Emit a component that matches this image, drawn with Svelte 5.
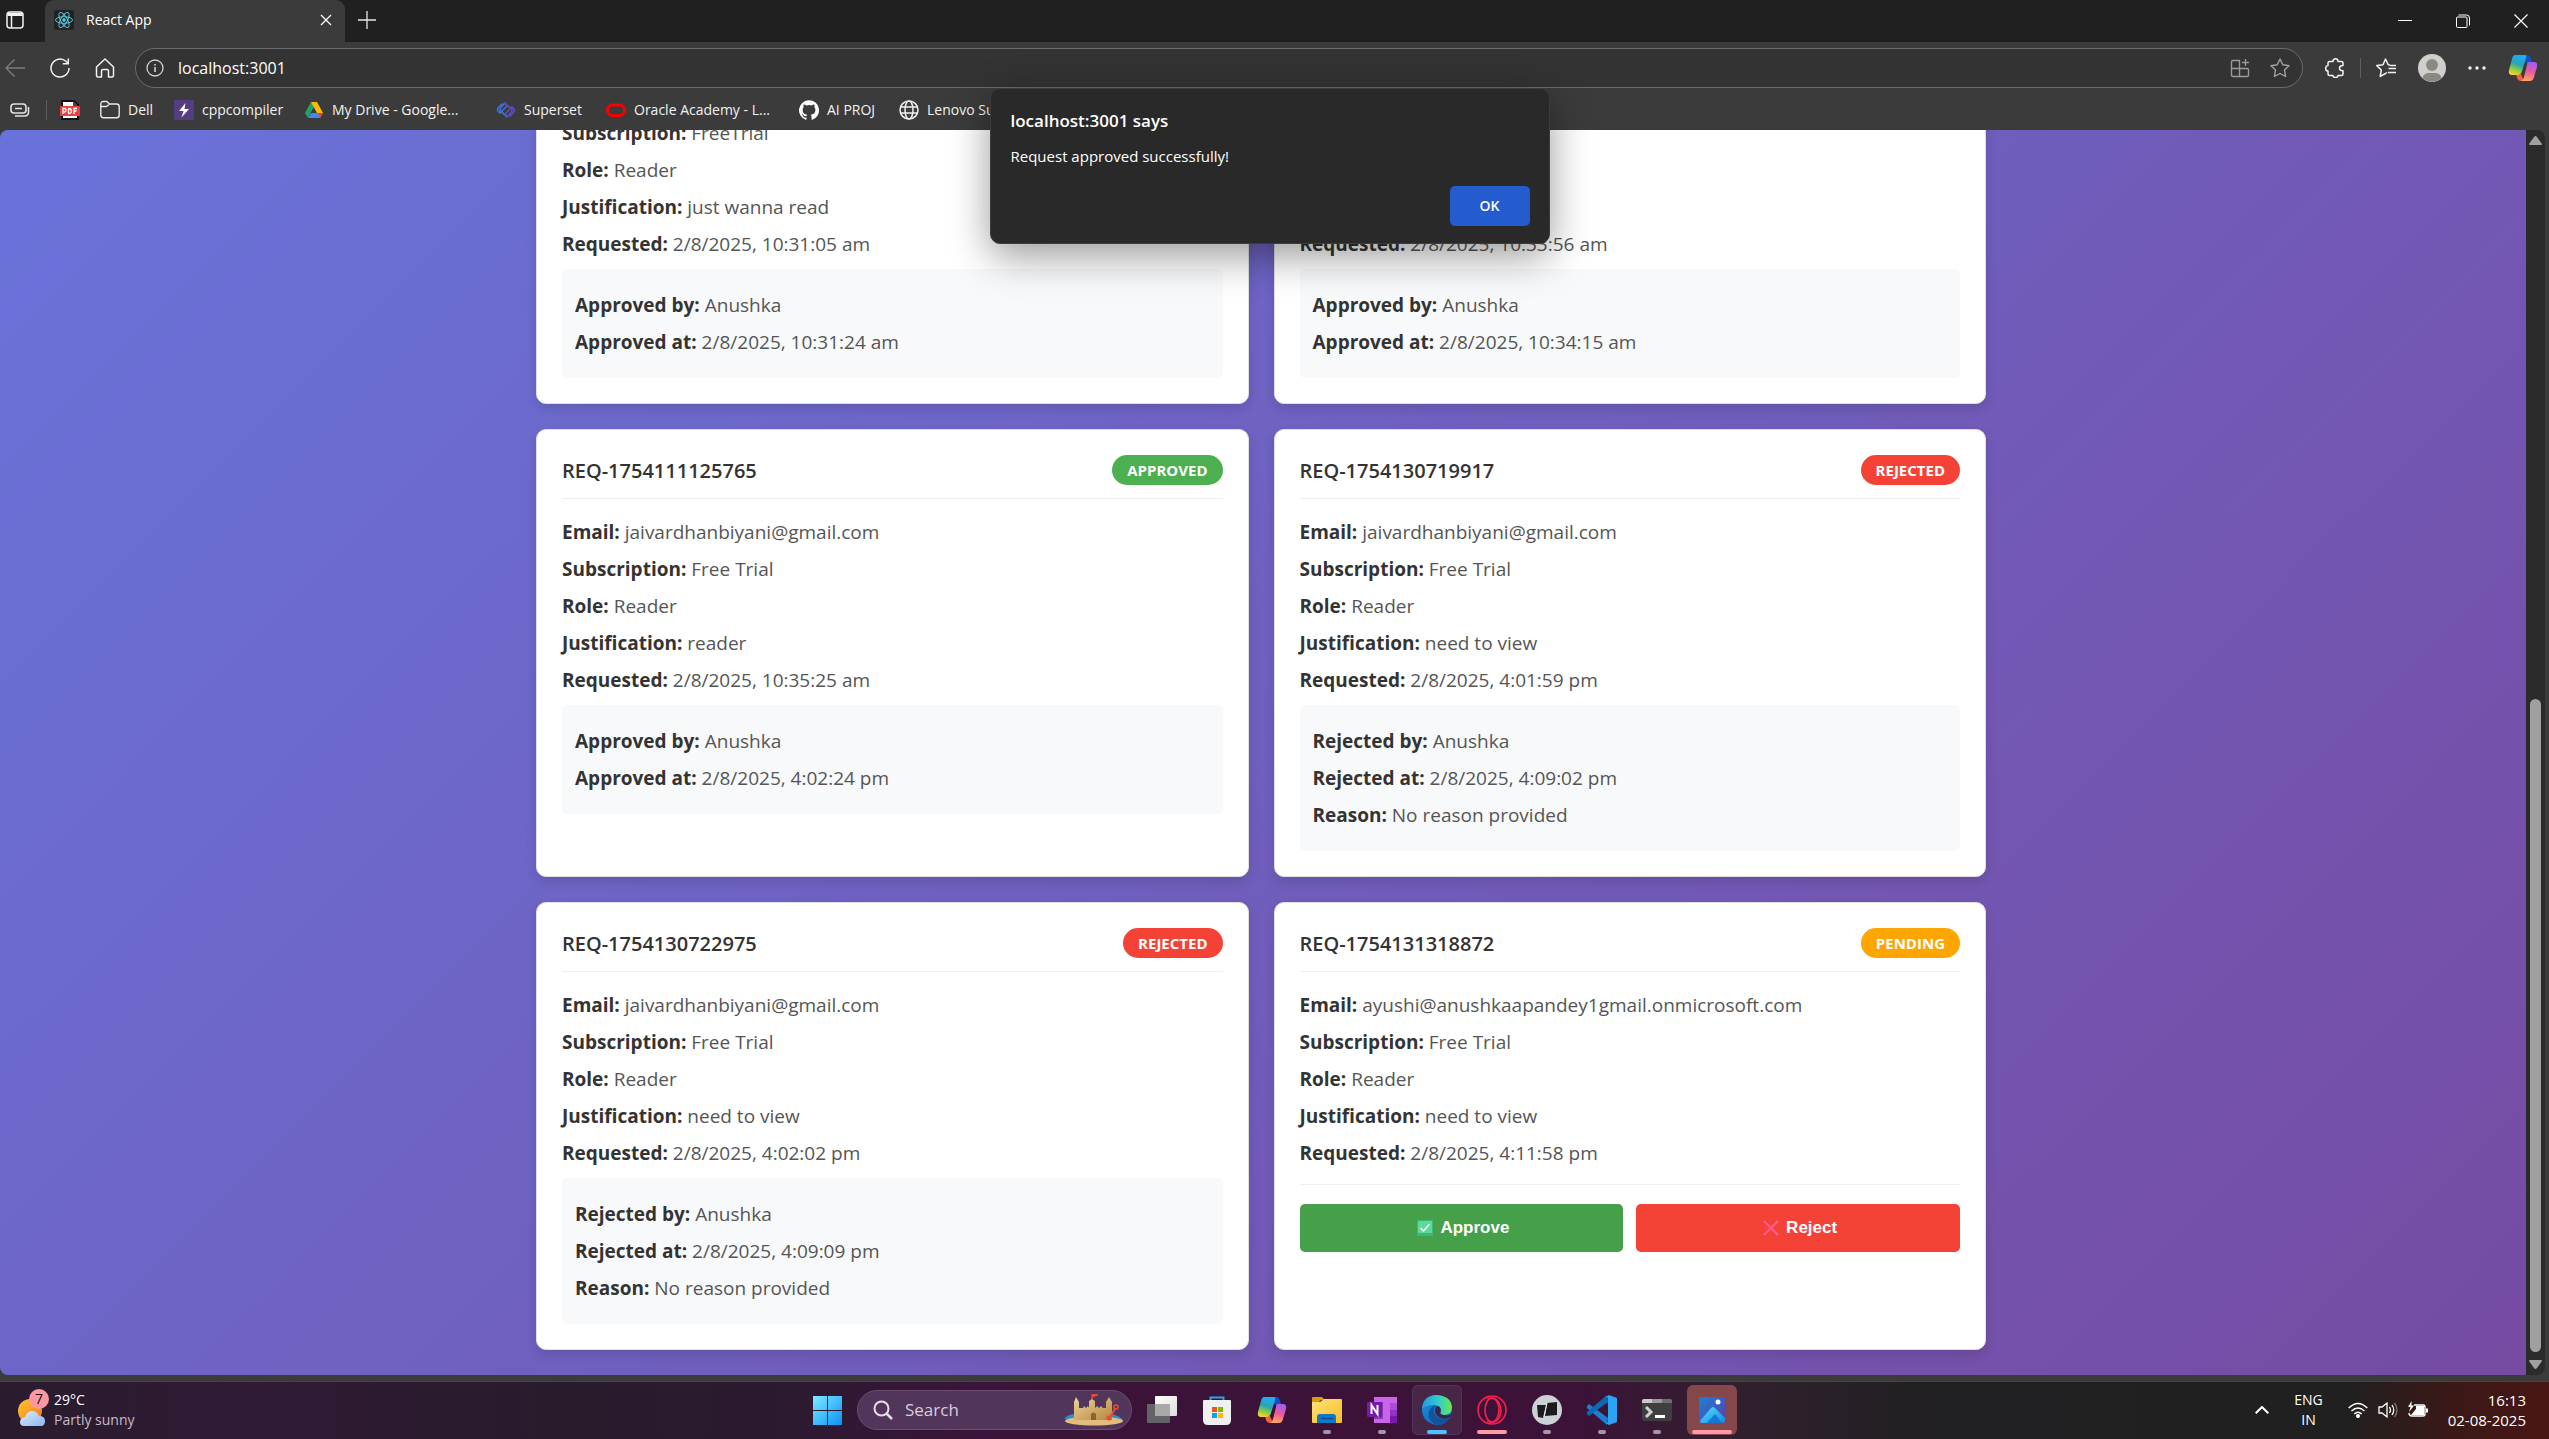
<script>
  const bookmarks = [
    { icon: 'pdf', label: '', width: 20 },
    { icon: 'folder', label: 'Dell', width: 54 },
    { icon: 'bolt', label: 'cppcompiler', width: 110 },
    { icon: 'drive', label: 'My Drive - Google...', width: 172 },
    { icon: 'superset', label: 'Superset', width: 90 },
    { icon: 'oracle', label: 'Oracle Academy - L...', width: 173 },
    { icon: 'github', label: 'AI PROJ', width: 80 },
    { icon: 'globe', label: 'Lenovo Su', width: 110 }
  ];

  const requests = [
    {
      status: 'approved',
      rows: [
        ['Subscription', 'FreeTrial'],
        ['Role', 'Reader'],
        ['Justification', 'just wanna read'],
        ['Requested', '2/8/2025, 10:31:05 am']
      ],
      outcome: [
        ['Approved by', 'Anushka'],
        ['Approved at', '2/8/2025, 10:31:24 am']
      ]
    },
    {
      status: 'approved',
      rows: [['Requested', '2/8/2025, 10:33:56 am']],
      outcome: [
        ['Approved by', 'Anushka'],
        ['Approved at', '2/8/2025, 10:34:15 am']
      ]
    },
    {
      id: 'REQ-1754111125765',
      status: 'approved',
      rows: [
        ['Email', 'jaivardhanbiyani@gmail.com'],
        ['Subscription', 'Free Trial'],
        ['Role', 'Reader'],
        ['Justification', 'reader'],
        ['Requested', '2/8/2025, 10:35:25 am']
      ],
      outcome: [
        ['Approved by', 'Anushka'],
        ['Approved at', '2/8/2025, 4:02:24 pm']
      ]
    },
    {
      id: 'REQ-1754130719917',
      status: 'rejected',
      rows: [
        ['Email', 'jaivardhanbiyani@gmail.com'],
        ['Subscription', 'Free Trial'],
        ['Role', 'Reader'],
        ['Justification', 'need to view'],
        ['Requested', '2/8/2025, 4:01:59 pm']
      ],
      outcome: [
        ['Rejected by', 'Anushka'],
        ['Rejected at', '2/8/2025, 4:09:02 pm'],
        ['Reason', 'No reason provided']
      ]
    },
    {
      id: 'REQ-1754130722975',
      status: 'rejected',
      rows: [
        ['Email', 'jaivardhanbiyani@gmail.com'],
        ['Subscription', 'Free Trial'],
        ['Role', 'Reader'],
        ['Justification', 'need to view'],
        ['Requested', '2/8/2025, 4:02:02 pm']
      ],
      outcome: [
        ['Rejected by', 'Anushka'],
        ['Rejected at', '2/8/2025, 4:09:09 pm'],
        ['Reason', 'No reason provided']
      ]
    },
    {
      id: 'REQ-1754131318872',
      status: 'pending',
      rows: [
        ['Email', 'ayushi@anushkaapandey1gmail.onmicrosoft.com'],
        ['Subscription', 'Free Trial'],
        ['Role', 'Reader'],
        ['Justification', 'need to view'],
        ['Requested', '2/8/2025, 4:11:58 pm']
      ]
    }
  ];

  const apps = [
    { name: 'Task View', icon: 'taskview' },
    { name: 'Microsoft Store', icon: 'store' },
    { name: 'Copilot', icon: 'copilot' },
    { name: 'File Explorer', icon: 'explorer', mark: 'dot' },
    { name: 'OneNote', icon: 'onenote', mark: 'dot' },
    { name: 'Edge', icon: 'edge', mark: 'blue', tile: 'active' },
    { name: 'Opera', icon: 'opera', mark: 'pink' },
    { name: 'Phone Link', icon: 'link', mark: 'dot' },
    { name: 'Visual Studio Code', icon: 'vscode', mark: 'dot' },
    { name: 'Terminal', icon: 'terminal', mark: 'dot' },
    { name: 'Photos', icon: 'photos', mark: 'wide', tile: 'alert' }
  ];
</script>

{#snippet copilot(id)}
  <svg width="30" height="30" viewBox="0 0 30 30">
    <defs>
      <linearGradient id="{id}a" x1="0.6" y1="0" x2="0.3" y2="1">
        <stop offset="0" stop-color="#19b0f5" /><stop offset="0.45" stop-color="#2aa3b8" />
        <stop offset="0.7" stop-color="#7ecb4a" /><stop offset="1" stop-color="#ffd02e" />
      </linearGradient>
      <linearGradient id="{id}b" x1="0.6" y1="0" x2="0.4" y2="1">
        <stop offset="0" stop-color="#a05cf5" /><stop offset="0.5" stop-color="#ec5a9c" />
        <stop offset="1" stop-color="#ffa75c" />
      </linearGradient>
    </defs>
    <path d="M15 2h4q3 0 4 4l1 3h-5q-3 0-4 3z" fill="#1650c8" />
    <path d="M8 21h5l3 7h-3q-3 0-4-3z" fill="#f4603c" />
    <path d="M7 2h10q2 0 1 3l-4 13q-1 4-5 4H4q-4 0-3-5L4 6q1-4 3-4z" fill="url(#{id}a)" />
    <path d="M20 9h6q4 0 3 5l-3 10q-1 4-4 4H12q3 0 4-4l3-12q0-3 1-3z" fill="url(#{id}b)" />
  </svg>
{/snippet}

{#snippet bookmarkIcon(name)}
  {#if name === 'pdf'}
    <svg width="20" height="20" viewBox="0 0 20 20">
      <path d="M2 1h12l4 4v14H2z" fill="#fff" stroke="#111" stroke-width="2" />
      <path d="M13 1v5h5z" fill="#444" />
      <rect x="0" y="6" width="20" height="10" rx="1" fill="#f03e3e" />
      <path d="M3 14V8.500h1.500q1.500 0 1.500 1.700T4.500 12H3M8.500 8.500v5q3 0 3-2.500t-3-2.500M14 14V8.500h3M14 11h2.500" fill="none" stroke="#fff" stroke-width="1.300" />
    </svg>
  {:else if name === 'folder'}
    <svg width="20" height="20" viewBox="0 0 20 20" fill="none" stroke="#e8e8e8" stroke-width="1.400">
      <path d="M.8 5V4q0-2.500 2.500-2.500h3.500L9.500 4h7q2.700 0 2.700 2.700V15q0 2.800-2.700 2.800H3.500Q.8 17.800.8 15zM.8 6.500h5.700L9.500 4" />
    </svg>
  {:else if name === 'bolt'}
    <svg width="20" height="20" viewBox="0 0 20 20">
      <rect width="20" height="20" fill="#563d82" />
      <path d="M11.500 3 5 11h4.500l-2 6.500L15 9h-4.500z" fill="#fff" />
    </svg>
  {:else if name === 'drive'}
    <svg width="20" height="20" viewBox="0 0 20 20">
      <path d="M7 2h6L6.500 13 4 18 1 13z" fill="#1fa463" />
      <path d="M7 2h6l6 11h-6z" fill="#ffba00" />
      <path d="M4 18l3-5h12l-3 5z" fill="#4285f4" />
      <path d="M13.500 13H19l-3 5z" fill="#ea4335" />
    </svg>
  {:else if name === 'superset'}
    <svg width="20" height="20" viewBox="0 0 20 20" fill="none" stroke-width="1.700" stroke-linecap="round">
      <path d="M6 4 2.500 7.500q-2 2.500 0 4L4 13l7-7M9 3 5 7.500q-2 2.500 0 4l6 5" stroke="#3f6fd0" />
      <path d="M14 16l3.500-3.500q2-2.500 0-4L16 7l-7 7M11 17l4-4.500q2-2.500 0-4L9 3.500" stroke="#5b4cc0" />
    </svg>
  {:else if name === 'oracle'}
    <svg width="20" height="20" viewBox="0 0 20 20" fill="none" stroke="#f80000" stroke-width="3">
      <rect x="1.500" y="5" width="17" height="10.500" rx="5" />
    </svg>
  {:else if name === 'github'}
    <svg width="20" height="20" viewBox="0 0 16 16" fill="#fff">
      <path d="M8 .2a8 8 0 0 0-2.530 15.590c.4.070.55-.17.55-.38v-1.340c-2.230.48-2.700-1.070-2.700-1.070-.36-.92-.89-1.170-.89-1.170-.73-.5.060-.49.060-.49.8.060 1.230.83 1.230.83.71 1.220 1.870.87 2.330.66.070-.52.280-.87.500-1.070-1.770-.2-3.640-.89-3.640-3.950 0-.87.31-1.590.82-2.150-.08-.2-.36-1.020.08-2.120 0 0 .67-.21 2.200.82a7.600 7.600 0 0 1 4 0c1.530-1.040 2.200-.82 2.200-.82.44 1.100.16 1.920.08 2.120.51.56.82 1.270.82 2.150 0 3.070-1.870 3.750-3.650 3.950.29.25.54.73.54 1.480v2.190c0 .21.15.46.55.38A8 8 0 0 0 8 .2z" />
    </svg>
  {:else}
    <svg width="20" height="20" viewBox="0 0 20 20" fill="none" stroke="#f0f0f0" stroke-width="1.500">
      <circle cx="10" cy="10" r="9" /><ellipse cx="10" cy="10" rx="4" ry="9" />
      <path d="M1.500 7h17M1.500 13h17" />
    </svg>
  {/if}
{/snippet}

{#snippet appIcon(name)}
  {#if name === 'taskview'}
    <svg width="30" height="30" viewBox="0 0 30 30">
      <defs><linearGradient id="tv" x2="1" y2="1"><stop stop-color="#fff" /><stop offset="1" stop-color="#ddd" /></linearGradient></defs>
      <rect x="0" y="9" width="23" height="19" rx="1" fill="#66626a" />
      <rect x="8" y="1" width="22" height="20" rx="1" fill="url(#tv)" />
      <rect x="8" y="9" width="15" height="12" fill="#a9a9a9" />
    </svg>
  {:else if name === 'store'}
    <svg width="30" height="30" viewBox="0 0 30 30">
      <path d="M8.500 8V2.500h13V8" fill="none" stroke="#28a8ea" stroke-width="2" />
      <path d="M1 6q0-1 1-1h26q1 0 1 1v19q0 5-5 5H6q-5 0-5-5z" fill="#f0f0f2" />
      <path d="M10 12h5v5h-5z" fill="#f25022" /><path d="M16 12h5v5h-5z" fill="#7fba00" />
      <path d="M10 18h5v5h-5z" fill="#00a4ef" /><path d="M16 18h5v5h-5z" fill="#ffb900" />
    </svg>
  {:else if name === 'copilot'}
    {@render copilot('task')}
  {:else if name === 'explorer'}
    <svg width="30" height="30" viewBox="0 0 30 30">
      <defs><linearGradient id="fx" x2="1" y2="1"><stop stop-color="#ffe27a" /><stop offset="1" stop-color="#f9bd24" /></linearGradient></defs>
      <path d="M0 3q0-1 1-1h9l3 3h-4l-2 2H0z" fill="#dc9a0a" />
      <path d="M0 7h8l4-3h17q1 0 1 1v22q0 1-1 1H1q-1 0-1-1z" fill="url(#fx)" />
      <path d="M5 28v-6q0-3 3-3h13q3 0 3 3v6z" fill="#0f78c8" />
      <path d="M9 23.500h12" stroke="#084b8a" stroke-width="1.500" />
    </svg>
  {:else if name === 'onenote'}
    <svg width="30" height="30" viewBox="0 0 30 30">
      <path d="M7 2h23v26H7z" fill="#ca64ea" /><path d="M23 8h7v7h-7z" fill="#ae4bd5" />
      <path d="M23 15h7v7h-7z" fill="#9332bf" /><path d="M23 21h7v7h-7z" fill="#7719aa" />
      <path d="M7 7h9v17H7z" fill="#8a3cab" />
      <rect x="0" y="7" width="15" height="15" rx="1" fill="#7719aa" />
      <path d="M4.500 19v-9l6 9v-9" fill="none" stroke="#fff" stroke-width="2" />
    </svg>
  {:else if name === 'edge'}
    <svg width="30" height="30" viewBox="0 0 30 30">
      <defs>
        <linearGradient id="eg1" x1="0" x2="1"><stop stop-color="#1b9de2" /><stop offset="0.5" stop-color="#31c6d3" /><stop offset="1" stop-color="#66eb4e" /></linearGradient>
        <linearGradient id="eg2" y2="1"><stop stop-color="#1795dd" /><stop offset="1" stop-color="#0b5cb8" /></linearGradient>
      </defs>
      <path d="M0 15A15 15 0 0 1 15 0a15 15 0 0 1 10 26 15 15 0 0 1-25-11z" fill="url(#eg2)" />
      <path d="M0 14Q1 0 15 0q14 1 15 12 0 8-8 8-4 0-4-2 2-2 1-4-2-4-8-4-7 0-11 4z" fill="url(#eg1)" />
      <path d="M11 11Q3 18 9 26q3 4 8 4 8-1 11-8-5 3-11 1-6-3-5-9 0-2 2-4z" fill="#12539b" />
      <path d="M14 12q-3 6 3 10 5 3 11 0l1.500-3q-4 2-8 1-4-1-3-3 1-3-1-5-2-2-3.500 0z" fill="#402246" />
    </svg>
  {:else if name === 'opera'}
    <svg width="30" height="30" viewBox="0 0 30 30" fill="none" stroke="#fa1e4e" stroke-width="1.600">
      <circle cx="15" cy="15" r="14" /><ellipse cx="15" cy="15" rx="7" ry="12" />
      <path d="M10 3.500q12-3 14 11.500-1 15-14 11.500" />
    </svg>
  {:else if name === 'link'}
    <svg width="30" height="30" viewBox="0 0 30 30">
      <circle cx="15" cy="15" r="15" fill="#ccd1d6" />
      <path d="M5 10h9l-3 13-5-1z" fill="#1c1c1e" /><path d="M15 8l10-1v13l-12 1z" fill="#1c1c1e" />
      <path d="M15 8l-3 14" stroke="#e9ecef" />
    </svg>
  {:else if name === 'vscode'}
    <svg width="30" height="30" viewBox="0 0 30 30">
      <path d="M21 23 2 9l-2 2v2l20 17z" fill="#1b7fd0" />
      <path d="M21 7 2 21l-2-2v-2L20 0z" fill="#0f68b4" />
      <path d="M22 0l8 3v24l-8 3-3-2 2-1V3l-2-1z" fill="#2ba5f3" />
    </svg>
  {:else if name === 'terminal'}
    <svg width="30" height="30" viewBox="0 0 30 30">
      <rect x="0" y="4" width="30" height="22" rx="2" fill="#3f3f40" />
      <path d="M2 4h8v4H0V6q0-2 2-2z" fill="#c9c9c9" /><path d="M10 4h10v4H10z" fill="#9a9a9a" />
      <path d="M20 4h8q2 0 2 2v2H20z" fill="#6d6d6d" />
      <path d="M4 12l5 5-5 5" fill="none" stroke="#d0d0d0" stroke-width="3" />
      <path d="M13 21.500h10" stroke="#fff" stroke-width="3" />
    </svg>
  {:else}
    <svg width="30" height="30" viewBox="0 0 30 30">
      <defs>
        <linearGradient id="ph1" x2="1" y2="1"><stop stop-color="#1b7fd8" /><stop offset="1" stop-color="#5a3fa8" /></linearGradient>
        <linearGradient id="ph2" x2="1" y2="1"><stop stop-color="#55e0ff" /><stop offset="1" stop-color="#1687e0" /></linearGradient>
      </defs>
      <rect x="2" y="2" width="26" height="26" rx="3" fill="url(#ph1)" />
      <path d="M3 26 14 13q2-2 4 0l10 10v2q0 3-3 3H5q-2 0-2-2z" fill="url(#ph2)" />
      <path d="M10 28l8-9 7 9z" fill="#1377d6" />
      <circle cx="21" cy="7" r="2.500" fill="#fff" />
    </svg>
  {/if}
{/snippet}

<div class="screen">
  <header class="tabstrip">
    <button class="tab-actions" aria-label="Tab actions">
      <svg width="18" height="18" viewBox="0 0 18 18" fill="none" stroke="#f2f2f2" stroke-width="1.500">
        <rect x="1" y="1" width="16" height="16" rx="3" /><path d="M1.500 3.500h15" stroke-width="3" /><path d="M5.500 5v12" />
      </svg>
    </button>
    <div class="tab">
      <svg width="20" height="20" viewBox="0 0 20 20" fill="none" stroke="#58c4dc" stroke-width="1">
        <rect width="20" height="20" rx="2" fill="#222" stroke="none" />
        <ellipse cx="10" cy="10" rx="8.500" ry="3.300" />
        <ellipse cx="10" cy="10" rx="8.500" ry="3.300" transform="rotate(60 10 10)" />
        <ellipse cx="10" cy="10" rx="8.500" ry="3.300" transform="rotate(120 10 10)" />
        <circle cx="10" cy="10" r="1.300" fill="#58c4dc" />
      </svg>
      <span class="tab-title">React App</span>
      <button aria-label="Close tab">
        <svg width="12" height="12" viewBox="0 0 12 12" stroke="#fff" stroke-width="1.400"><path d="M1 1l10 10M11 1 1 11" /></svg>
      </button>
    </div>
    <button class="new-tab" aria-label="New tab">
      <svg width="18" height="18" viewBox="0 0 18 18" stroke="#e6e6e6" stroke-width="1.300"><path d="M9 0v18M0 9h18" /></svg>
    </button>
    <div class="window-controls">
      <button aria-label="Minimize"><svg width="14" height="14" viewBox="0 0 14 14" stroke="#fff"><path d="M0 6.500h14" /></svg></button>
      <button aria-label="Restore">
        <svg width="14" height="14" viewBox="0 0 14 14" fill="none" stroke="#fff"><rect x=".5" y="3" width="10.500" height="10.500" rx="1" /><path d="M2.500 1h8q3 0 3 3v7.500" /></svg>
      </button>
      <button aria-label="Close"><svg width="14" height="14" viewBox="0 0 14 14" stroke="#fff" stroke-width="1.200"><path d="M.5.5l13 13M13.500.5l-13 13" /></svg></button>
    </div>
  </header>

  <div class="toolbar">
    <div class="nav">
      <button aria-label="Back"><svg width="20" height="20" viewBox="0 0 20 20" fill="none" stroke="#7b7b7b" stroke-width="1.400"><path d="M20 10H1M9.500 1.500 1 10l8.500 8.500" /></svg></button>
      <button aria-label="Refresh"><svg width="20" height="20" viewBox="0 0 20 20" fill="none" stroke="#f2f2f2" stroke-width="1.500"><path d="M19 10a9 9 0 1 1-3-6.700L18 5.500M18.300.5v5.200h-5.500" /></svg></button>
      <button aria-label="Home"><svg width="20" height="20" viewBox="0 0 20 20" fill="none" stroke="#f2f2f2" stroke-width="1.500" stroke-linejoin="round"><path d="M1.500 9 10 1l8.500 8v8.500q0 1.500-1.500 1.500h-3.500v-6q0-1.500-1.500-1.500H8q-1.500 0-1.500 1.500v6H3q-1.500 0-1.500-1.500z" /></svg></button>
    </div>
    <div class="address">
      <svg width="18" height="18" viewBox="0 0 18 18" fill="none" stroke="#d2d2d2" stroke-width="1.300"><circle cx="9" cy="9" r="8" /><path d="M9 8v5M9 5v1.500" stroke-width="1.600" /></svg>
      <input type="text" value="localhost:3001" aria-label="Address" />
      <button aria-label="Install app"><svg width="20" height="20" viewBox="0 0 20 20" fill="none" stroke="#9a9a9a" stroke-width="1.400"><path d="M3 2.500h6.500v16H3q-1.500 0-1.500-1.500V4Q1.500 2.500 3 2.500zM1.500 10.500H17q1.500 0 1.500 1.500v5q0 1.500-1.500 1.500H9.500M15.500 1v7M12 4.500h7" /></svg></button>
      <button aria-label="Add to favorites"><svg width="20" height="20" viewBox="0 0 20 20" fill="none" stroke="#a2a2a2" stroke-width="1.400" stroke-linejoin="round"><path d="M10 1l2.800 5.800 6.200.9-4.500 4.400 1.100 6.400L10 15.500l-5.600 3 1.100-6.400L1 7.700l6.200-.9z" /></svg></button>
    </div>
    <div class="tools">
      <button aria-label="Extensions"><svg width="20" height="20" viewBox="0 0 20 20" fill="none" stroke="#f2f2f2" stroke-width="1.500" stroke-linejoin="round"><path d="M4.500 3.500H8q0-2.700 2.500-2.700T13 3.500h3.500q1.500 0 1.500 1.500v2.500q-3.500 0-3.500 2.700t3.500 2.600V16q0 1.500-1.500 1.500H13q0 2-2.500 2T8 17.500H4.500Q3 17.500 3 16v-3q-2.300 0-2.300-2.700T3 7.500V5q0-1.500 1.500-1.500z" /></svg></button>
      <span class="rule"></span>
      <button aria-label="Favorites"><svg width="20" height="20" viewBox="0 0 20 20" fill="none" stroke="#f2f2f2" stroke-width="1.500" stroke-linejoin="round"><path d="M14 7l-1.800-.3L9.500 1 7 6.700l-6.200.9 4.500 4.400-1.100 6.400 5.300-2.900 1.500-1M12.500 10.500H20M12 14.500h8M14 7.500h6" /></svg></button>
      <button aria-label="Profile"><svg width="28" height="28" viewBox="0 0 28 28"><circle cx="14" cy="14" r="14" fill="#d0cfcb" /><circle cx="14" cy="11" r="6" fill="#8b8984" /><path d="M4.500 24q1-5 7-5h5q6 0 7 5a14 14 0 0 1-19 0z" fill="#8b8984" /></svg></button>
      <button aria-label="Settings and more"><svg width="18" height="18" viewBox="0 0 18 18" fill="#f2f2f2"><circle cx="2" cy="9" r="1.700" /><circle cx="9" cy="9" r="1.700" /><circle cx="16" cy="9" r="1.700" /></svg></button>
      <button aria-label="Copilot">{@render copilot('bar')}</button>
    </div>
  </div>

  <nav class="bookmarks" aria-label="Bookmarks">
    <button aria-label="Workspaces"><svg width="20" height="14" viewBox="0 0 20 14" fill="none" stroke="#e2e2e2" stroke-width="1.600"><rect x="1" y="1" width="15" height="9" rx="3" /><path d="M5 5.500h7M18.500 4v5q0 4-4 4H5" /></svg></button>
    <span class="rule"></span>
    {#each bookmarks as mark}
      <a href="#{mark.icon}" aria-label={mark.label || 'PDF'} style:width="{mark.width}px">
        {@render bookmarkIcon(mark.icon)}
        {#if mark.label}<span>{mark.label}</span>{/if}
      </a>
    {/each}
  </nav>

  <div class="view">
    <main class="page">
      <div class="grid">
        {#each requests as request}
          <article class="card">
            {#if request.id}
              <header class="card-head">
                <h3>{request.id}</h3>
                <span class="badge {request.status}">{request.status}</span>
              </header>
            {/if}
            <div class="details" class:low={!request.id}>
              {#each request.rows as [label, value]}
                <p><strong>{label}:</strong> {value}</p>
              {/each}
            </div>
            {#if request.outcome}
              <div class="outcome">
                {#each request.outcome as [label, value]}
                  <p><strong>{label}:</strong> {value}</p>
                {/each}
              </div>
            {:else}
              <div class="actions">
                <button class="approve">
                  <svg width="16" height="16" viewBox="0 0 16 16"><rect width="16" height="16" fill="#3fb57d" /><rect x="1" y="1" width="14" height="12" fill="#5adb98" /><path d="M3.500 8l3 3 6-7" fill="none" stroke="#fff" stroke-width="1.500" /></svg>
                  Approve
                </button>
                <button class="reject">
                  <svg width="16" height="16" viewBox="0 0 16 16" stroke="#ff5c96" stroke-width="2"><path d="M1 1l14 14M15 1 1 15" /></svg>
                  Reject
                </button>
              </div>
            {/if}
          </article>
        {/each}
      </div>
    </main>
    <div class="scrollbar">
      <svg width="13" height="9" viewBox="0 0 13 9" fill="#a0a0a0"><path d="M5 1q1.500-2 3 0l5 7q0 1-1 1H1Q0 9 0 8z" /></svg>
      <div class="track"><div class="thumb"></div></div>
      <svg width="13" height="9" viewBox="0 0 13 9" fill="#a0a0a0"><path d="M5 8q1.500 2 3 0l5-7q0-1-1-1H1Q0 0 0 1z" /></svg>
    </div>
  </div>

  <footer class="taskbar">
    <button class="weather">
      <svg width="32" height="38" viewBox="0 0 32 38">
        <defs><linearGradient id="sun" x2="1" y2="1"><stop stop-color="#ffc52e" /><stop offset="1" stop-color="#f07818" /></linearGradient><linearGradient id="cloud" y2="1"><stop stop-color="#dcecff" /><stop offset="1" stop-color="#8fb6ee" /></linearGradient></defs>
        <circle cx="12" cy="22" r="12" fill="url(#sun)" />
        <path d="M6 37q-4 0-4-4t5-5q2-6 7-6t7 5q6 0 6 5 0 5-4 5z" fill="url(#cloud)" />
        <circle cx="21" cy="10" r="10" fill="#ff97a0" />
        <text x="21" y="15" text-anchor="middle" font-size="14" fill="#1c1014">7</text>
      </svg>
      <span class="lines"><span>29°C</span><span class="dim">Partly sunny</span></span>
    </button>

    <div class="centre">
      <button class="app" aria-label="Start">
        <svg width="30" height="30" viewBox="0 0 30 30">
          <defs><linearGradient id="win" x2="1" y2="1"><stop stop-color="#7cebff" /><stop offset="1" stop-color="#0a92f5" /></linearGradient></defs>
          <path d="M1 1h14v14H1zM16 1h14v14H16zM1 16h14v14H1zM16 16h14v14H16z" fill="url(#win)" />
        </svg>
      </button>
      <label class="search">
        <svg width="20" height="20" viewBox="0 0 20 20" fill="none" stroke="#e6dfe8" stroke-width="2"><circle cx="8.500" cy="8.500" r="7" /><path d="M13.500 13.500 19 19" stroke-width="2.500" /></svg>
        <input type="text" placeholder="Search" aria-label="Search" />
        <svg width="60" height="32" viewBox="0 0 60 32">
          <defs><linearGradient id="sand" y2="1"><stop stop-color="#efd39a" /><stop offset="1" stop-color="#b58640" /></linearGradient></defs>
          <path d="M0 25q4-5 12-5h36q8 2 11 6z" fill="#2a8fd0" />
          <ellipse cx="30" cy="27" rx="29" ry="4.500" fill="#e2bd7c" />
          <path d="M10 26V8l2-5 3 5v6h4l1-2 2 2 2-2 1 2V7l3-2 3 2v7l2-2 2 2 2-2 2 2h3V8l3-5 3 5v18z" fill="url(#sand)" />
          <path d="M27 26v-6q2-3 5 0v6z" fill="#8a6430" /><path d="M28 5V0l6 1-6 2z" fill="#f0492e" stroke="#f0492e" />
          <path d="M45 25l6-10" stroke="#f0492e" stroke-width="2" /><circle cx="52" cy="13" r="2" fill="none" stroke="#f0492e" stroke-width="1.500" /><circle cx="45" cy="24" r="2.500" fill="#f0492e" />
        </svg>
      </label>
      {#each apps as app}
        <button class="app {app.tile ?? ''}" aria-label={app.name}>
          {@render appIcon(app.icon)}
          {#if app.mark}<span class="mark {app.mark}"></span>{/if}
        </button>
      {/each}
    </div>

    <div class="tray">
      <svg width="14" height="8" viewBox="0 0 14 8" fill="none" stroke="#fff" stroke-width="2"><path d="M.7 7.300 7 1l6.300 6.300" /></svg>
      <span class="lines mid lang"><span>ENG</span><span>IN</span></span>
      <div class="status">
        <svg width="20" height="16" viewBox="0 0 20 16" fill="none" stroke="#fff" stroke-width="1.500"><path d="M.7 6q9.300-9 18.600 0M3.500 9q6.500-6 13 0M6.300 12q3.700-3.500 7.400 0" /><circle cx="10" cy="14" r="1.300" fill="#fff" /></svg>
        <svg width="20" height="18" viewBox="0 0 20 18" fill="none" stroke="#fff" stroke-width="1.300"><path d="M1 6h3l5-4v14l-5-4H1zM11.500 6q2 3 0 6M14 4q3.500 5 0 10" /><path d="M16.500 2q5 7 0 14" stroke="#777" /></svg>
        <svg width="20" height="18" viewBox="0 0 20 18" fill="none" stroke="#fff" stroke-width="1.400"><path d="M6 4h9q2 0 2 2v7q0 2-2 2H4q-3 0-3-3" /><path d="M8 5h8v9H3l5-6z" fill="#fff" stroke="none" /><path d="M18 7.500h2v4h-2z" fill="#fff" stroke="none" /><path d="M3.500 0 0 6h2.500L1 11l5-6.500H3.500z" fill="#fff" stroke="none" /></svg>
      </div>
      <span class="lines end"><span>16:13</span><span>02-08-2025</span></span>
    </div>
  </footer>

  <div class="dialog" role="alertdialog" aria-labelledby="dialog-title" aria-describedby="dialog-text">
    <h2 id="dialog-title">localhost:3001 says</h2>
    <p id="dialog-text">Request approved successfully!</p>
    <button>OK</button>
  </div>
</div>

<style>
  :global(body) {
    margin: 0;
    background: #3b3b3b;
  }
  .screen {
    position: relative;
    display: flex;
    flex-direction: column;
    height: 100vh;
    overflow: hidden;
    background: #3b3b3b;
    color: #fff;
    font-family: 'Segoe UI', 'Open Sans', 'Noto Sans', sans-serif;
    font-size: 14px;
    line-height: 20px;
  }
  .screen *,
  .screen {
    box-sizing: border-box;
  }
  button {
    display: flex;
    align-items: center;
    justify-content: center;
    padding: 0;
    border: 0;
    background: none;
    color: inherit;
    font: inherit;
  }
  input {
    flex: 1;
    min-width: 0;
    padding: 0;
    border: 0;
    outline: 0;
    background: none;
    color: inherit;
    font: inherit;
  }
  svg {
    display: block;
    flex: none;
  }
  h2,
  h3,
  p {
    margin: 0;
  }

  .tabstrip {
    display: flex;
    flex: none;
    height: 42px;
    background: #202020;
  }
  .tab-actions {
    width: 45px;
    padding: 0 15px 2px 0;
  }
  .tab {
    display: flex;
    align-items: center;
    width: 300px;
    padding: 0 13px 2px 9px;
    border-radius: 9px 9px 0 0;
    background: #3b3b3b;
  }
  .tab-title {
    flex: 1;
    padding-left: 12px;
  }
  .new-tab {
    width: 44px;
    padding-bottom: 3px;
  }
  .window-controls {
    display: flex;
    margin-left: auto;
  }
  .window-controls button {
    width: 58px;
    padding-left: 2px;
  }

  .toolbar {
    display: flex;
    flex: none;
    align-items: center;
    height: 52px;
  }
  .nav {
    display: flex;
    gap: 25px;
    width: 135px;
    padding-left: 5px;
  }
  .address {
    display: flex;
    flex: 1;
    align-items: center;
    gap: 20px;
    height: 40px;
    padding: 0 12px 0 10px;
    border: 1px solid #6c6c6c;
    border-radius: 20px;
    background: #333;
    font-size: 16px;
  }
  .address input {
    margin-left: -6px;
  }
  .tools {
    display: flex;
    align-items: center;
    gap: 22px;
    padding: 0 11px 0 22px;
  }
  .rule {
    width: 1px;
    height: 20px;
    background: #5e5e5e;
  }
  .tools .rule {
    margin: 0 -7px;
  }

  .bookmarks {
    display: flex;
    flex: none;
    align-items: center;
    height: 36px;
    padding: 0 0 4px 10px;
  }
  .bookmarks .rule {
    margin: 0 13px 0 16px;
  }
  .bookmarks a {
    display: flex;
    align-items: center;
    gap: 8px;
    margin-right: 20px;
    color: #f2f2f2;
    text-decoration: none;
    white-space: nowrap;
  }

  .view {
    display: flex;
    flex: 1;
    min-height: 0;
    margin: 0 4px 6px 0;
    border-radius: 8px;
    overflow: hidden;
  }
  .page {
    display: flex;
    flex: 1;
    flex-direction: column;
    align-items: center;
    justify-content: flex-end;
    padding: 0 4px 25px 0;
    background: linear-gradient(135deg, #667eea 0%, #764ba2 100%) bottom / 100% 2320px;
    font-size: 19px;
  }
  .grid {
    display: grid;
    grid-template-columns: 1fr 1fr;
    gap: 25px;
    width: 100%;
    max-width: 1450px;
  }
  .card {
    display: flex;
    flex-direction: column;
    padding: 25px;
    border: 1px solid #e0e0e0;
    border-radius: 10px;
    background: #fff;
    box-shadow: 0 5px 12px rgba(0, 0, 0, 0.12);
    color: #555;
  }
  .card-head {
    display: flex;
    align-items: center;
    justify-content: space-between;
    margin-bottom: 15px;
    padding-bottom: 13px;
    border-bottom: 1px solid #eee;
  }
  h3 {
    padding-top: 2px;
    color: #333;
    font-size: 20px;
    font-weight: 600;
    line-height: 28px;
  }
  .badge {
    padding: 0 15px;
    border-radius: 15px;
    color: #fff;
    font-size: 15px;
    font-weight: 700;
    line-height: 30px;
    text-transform: uppercase;
  }
  .approved {
    background: #4caf50;
  }
  .rejected {
    background: #f44336;
  }
  .pending {
    background: #ffa500;
  }
  .low {
    margin-top: auto;
  }
  .card p {
    line-height: 37px;
  }
  .card strong {
    color: #333;
    font-weight: 700;
  }
  .outcome {
    margin-top: 6px;
    padding: 18px 13px 17px;
    border-radius: 5px;
    background: #f8f9fa;
  }
  .actions {
    display: flex;
    gap: 13px;
    margin-top: 12px;
    padding-top: 19px;
    border-top: 1px solid #eee;
  }
  .actions button {
    flex: 1;
    gap: 7px;
    height: 48px;
    padding-left: 4px;
    border-radius: 5px;
    color: #fff;
    font: 700 17px 'Liberation Sans', Arial, sans-serif;
  }
  .approve {
    background: #45a049;
  }
  .reject {
    background: #f44336;
  }

  .scrollbar {
    display: flex;
    flex-direction: column;
    align-items: center;
    width: 19px;
    padding: 6px 0;
    background: #2b2b2b;
  }
  .track {
    display: flex;
    flex: 1;
    flex-direction: column;
    justify-content: flex-end;
    padding: 6px 0 8px;
  }
  .thumb {
    width: 11px;
    height: 54.4%;
    border-radius: 6px;
    background: #a0a0a0;
  }

  .taskbar {
    display: grid;
    grid-template-columns: 1fr auto 1fr;
    flex: none;
    align-items: center;
    height: 58px;
    padding: 0 10px 2px 0;
    border-top: 1px solid #4b4048;
    background: linear-gradient(90deg, #2a1c2e 0%, #301a34 10%, #281c2c 22%, #2c1a30 31%, #3a143a 38%, #3c1238 50%, #3c1238 62%, #31202f 68%, #222023 75%, #202020 92%, #3a1917 96%, #481614 100%);
  }
  .weather {
    justify-content: flex-start;
    justify-self: start;
    gap: 4px;
    padding-left: 18px;
    text-align: left;
  }
  .weather svg {
    margin-bottom: 4px;
  }
  .lines {
    display: flex;
    flex-direction: column;
  }
  .dim {
    color: #c4bcc6;
  }
  .centre {
    display: flex;
    align-items: center;
    gap: 5px;
  }
  .app {
    position: relative;
    width: 50px;
    height: 50px;
    border-radius: 6px;
  }
  .app.active {
    background: #472648;
    box-shadow: inset 0 0 0 1px #53345a;
  }
  .app.alert {
    background: #84484a;
  }
  .mark {
    position: absolute;
    bottom: 1px;
    left: 50%;
    width: 8px;
    height: 4px;
    border-radius: 2px;
    background: #a496a6;
    transform: translateX(-50%);
  }
  .mark.blue {
    width: 20px;
    background: #4cc2ff;
  }
  .mark.pink {
    width: 30px;
    background: #ff99a4;
  }
  .mark.wide {
    width: 40px;
    background: #ff99a4;
  }
  .search {
    display: flex;
    align-items: center;
    gap: 12px;
    width: 275px;
    height: 40px;
    padding: 0 7px 0 15px;
    border: 1px solid #6d4c70;
    border-radius: 20px;
    background: #52355a;
    font-size: 17px;
  }
  .search input::placeholder {
    color: #d8cddb;
    opacity: 1;
  }
  .tray {
    display: flex;
    align-items: center;
    justify-self: end;
    padding-right: 13px;
    font-size: 15px;
  }
  .lang {
    margin: 0 25px;
    font-size: 14px;
  }
  .mid {
    text-align: center;
  }
  .end {
    text-align: right;
  }
  .status {
    display: flex;
    align-items: center;
    gap: 10px;
    margin-right: 20px;
  }

  .dialog {
    position: absolute;
    top: 88px;
    left: 50%;
    display: flex;
    flex-direction: column;
    width: 560px;
    margin-left: -285px;
    padding: 20px 20px 17px;
    border: 1px solid #3c3c3c;
    border-radius: 10px;
    background: #292929;
    box-shadow: 0 12px 40px rgba(0, 0, 0, 0.4);
  }
  .dialog h2 {
    font-size: 17px;
    font-weight: 600;
    line-height: 24px;
  }
  .dialog p {
    margin: 13px 0 20px;
    font-size: 15px;
    line-height: 20px;
  }
  .dialog button {
    align-self: flex-end;
    width: 80px;
    height: 40px;
    margin-right: -1px;
    border-radius: 5px;
    background: #245ccf;
    font-weight: 600;
  }
</style>
